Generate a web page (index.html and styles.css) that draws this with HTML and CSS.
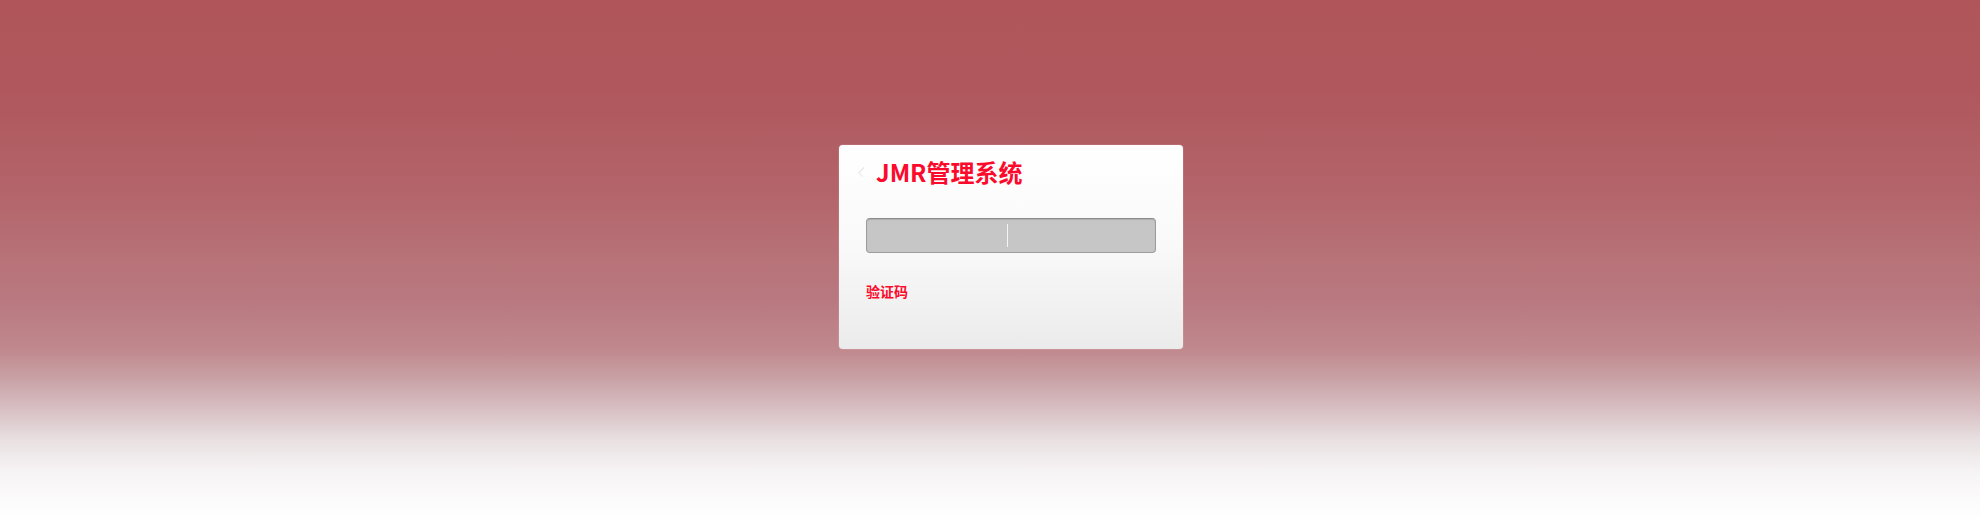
FILE: index.html
```html
<!DOCTYPE html>
<html lang="zh">
<head>
<meta charset="utf-8">
<title>JMR管理系统</title>
<link rel="stylesheet" href="styles.css">
</head>
<body>
<div class="page">
  <div class="login">
    <div class="head">
      <span class="mark"></span>
      <h1 class="title">JMR管理系统</h1>
    </div>
    <div class="field">
      <span class="cursor"></span>
    </div>
    <div class="captcha">验证码</div>
  </div>
</div>
</body>
</html>
```

FILE: styles.css
```css
html, body {
  margin: 0;
  padding: 0;
  height: 100%;
}
body {
  font-family: "Noto Sans CJK SC", "Noto Sans", sans-serif;
  background: linear-gradient(to bottom,
    #b0565b 0px,
    #af575c 90px,
    #b3646a 190px,
    #b77378 260px,
    #b97880 300px,
    #c0898e 350px,
    #c9a3a7 380px,
    #d8c0c4 410px,
    #e8e0e1 440px,
    #f6f3f4 470px,
    #fcfbfb 500px,
    #fefefe 518px);
  overflow: hidden;
}
.page {
  height: 518px;
  display: flex;
  justify-content: center;
  align-items: flex-start;
}
.login {
  margin-top: 145px;
  margin-left: 42px;
  width: 344px;
  height: 204px;
  box-sizing: border-box;
  border-radius: 4px;
  background: linear-gradient(to bottom, #ffffff 0%, #f9f9f9 50%, #ebebeb 100%);
  padding: 11px 27px 0 27px;
  box-shadow: 0 0 1px rgba(255,255,255,0.9);
}
.head {
  display: flex;
  align-items: center;
  height: 32px;
}
.mark {
  width: 5px;
  height: 7px;
  border-left: 1px solid #e2e2e2;
  border-bottom: 1px solid #ececec;
  transform: rotate(45deg);
  margin-left: -6px;
}
.title {
  margin: 0 0 0 10px;
  font-size: 24px;
  line-height: 32px;
  font-weight: 700;
  color: #fc0a2c;
}
.field {
  margin-top: 30px;
  width: 290px;
  height: 35px;
  box-sizing: border-box;
  border: 1px solid #9c9c9c;
  border-top-color: #8a8a8a;
  border-radius: 4px;
  background: #c6c6c6;
  box-shadow: inset 0 1px 1px rgba(0,0,0,0.12);
  display: flex;
  align-items: center;
  padding-left: 140px;
}
.cursor {
  width: 1px;
  height: 23px;
  background: #f4f4f4;
}
.captcha {
  margin-top: 28px;
  font-size: 14px;
  line-height: 20px;
  font-weight: 700;
  color: #fc0a2c;
}
```
